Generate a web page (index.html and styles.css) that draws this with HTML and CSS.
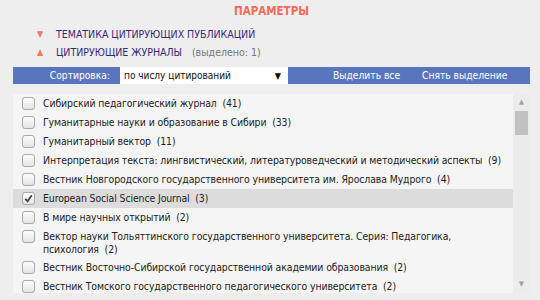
FILE: index.html
```html
<!DOCTYPE html>
<html lang="ru">
<head>
  <meta charset="UTF-8" />
  <title>Параметры</title>
  <link rel="stylesheet" href="styles.css">
</head>
<body>
  <div class="panel">
    <h2 class="title">ПАРАМЕТРЫ</h2>

    <div class="toggles">
      <div class="toggle">
        <span class="arrow">&#9660;</span>
        <span class="toggle-name">ТЕМАТИКА ЦИТИРУЮЩИХ ПУБЛИКАЦИЙ</span>
      </div>
      <div class="toggle">
        <span class="arrow">&#9650;</span>
        <span class="toggle-name">ЦИТИРУЮЩИЕ ЖУРНАЛЫ</span>
        <span class="toggle-note">(выделено: 1)</span>
      </div>
    </div>

    <div class="toolbar">
      <span class="sort-label">Сортировка:</span>
      <div class="sort-select">
        <span>по числу цитирований</span>
        <span class="sort-arrow">&#9660;</span>
      </div>
      <span class="tool-link select-all">Выделить все</span>
      <span class="tool-link">Снять выделение</span>
    </div>

    <div class="list-box">
      <div class="list">
        <label class="row"><span class="box"></span><span class="name">Сибирский педагогический журнал&nbsp;&nbsp;(41)</span></label>
        <label class="row"><span class="box"></span><span class="name">Гуманитарные науки и образование в Сибири&nbsp;&nbsp;(33)</span></label>
        <label class="row"><span class="box"></span><span class="name">Гуманитарный вектор&nbsp;&nbsp;(11)</span></label>
        <label class="row"><span class="box"></span><span class="name">Интерпретация текста: лингвистический, литературоведческий и методический аспекты&nbsp;&nbsp;(9)</span></label>
        <label class="row"><span class="box"></span><span class="name">Вестник Новгородского государственного университета им. Ярослава Мудрого&nbsp;&nbsp;(4)</span></label>
        <label class="row selected"><span class="box checked"><svg viewBox="0 0 12 12"><path d="M2.5 6.5 L5 9 L9.5 2.5" /></svg></span><span class="name">European Social Science Journal&nbsp;&nbsp;(3)</span></label>
        <label class="row"><span class="box"></span><span class="name">В мире научных открытий&nbsp;&nbsp;(2)</span></label>
        <label class="row"><span class="box"></span><span class="name">Вектор науки Тольяттинского государственного университета. Серия: Педагогика, психология&nbsp;&nbsp;(2)</span></label>
        <label class="row"><span class="box"></span><span class="name">Вестник Восточно-Сибирской государственной академии образования&nbsp;&nbsp;(2)</span></label>
        <label class="row"><span class="box"></span><span class="name">Вестник Томского государственного педагогического университета&nbsp;&nbsp;(2)</span></label>
      </div>
      <div class="scrollbar">
        <span class="scroll-btn">&#9650;</span>
        <span class="thumb"></span>
        <span class="track"></span>
        <span class="scroll-btn">&#9660;</span>
      </div>
    </div>
  </div>
</body>
</html>
```

FILE: styles.css
```css
* {
  margin: 0;
  padding: 0;
  box-sizing: border-box;
}

body {
  background: #eeeeee;
  color: #222;
  font-family: "DejaVu Sans Condensed", "DejaVu Sans", sans-serif;
  font-stretch: condensed;
  font-size: 11px;
  height: 300px;
  overflow: hidden;
}

.panel {
  padding: 4px 10px 0 13px;
}

.title {
  text-align: center;
  color: #f26a5a;
  font-size: 11.5px;
  font-weight: bold;
  line-height: 14px;
}

.toggles {
  padding: 9px 0 0 24px;
  display: flex;
  flex-direction: column;
  gap: 4px;
  font-size: 10.5px;
}

.toggle {
  display: flex;
  align-items: center;
  height: 14px;
}

.arrow {
  color: #f07a5c;
  font-size: 9px;
  width: 19px;
}

.toggle-name {
  color: #35297a;
}

.toggle-note {
  color: #777;
  margin-left: 10px;
}

.toolbar {
  margin-top: 8px;
  height: 17px;
  background: #5975bd;
  color: #fff;
  display: flex;
  align-items: center;
  font-size: 10.2px;
}

.sort-label {
  width: 97px;
  text-align: right;
}

.sort-select {
  margin-left: 10px;
  width: 168px;
  height: 17px;
  background: #fff;
  color: #111;
  display: flex;
  align-items: center;
  justify-content: space-between;
  padding: 0 7px 0 4px;
  font-size: 10px;
}

.sort-arrow {
  font-size: 9px;
}

.tool-link {
  margin-left: 22px;
}

.select-all {
  margin-left: 45px;
}

.list-box {
  margin-top: 10px;
  height: 199px;
  background: #f5f5f5;
  display: flex;
  overflow: hidden;
}

.list {
  flex: 1;
  overflow: hidden;
  font-size: 10.4px;
  letter-spacing: -0.1px;
}

.row {
  display: flex;
  align-items: flex-start;
  min-height: 19px;
  padding: 3px 0 2px 9px;
}

.row.selected {
  background: #dcdcdc;
}

.box {
  flex: none;
  width: 13px;
  height: 13px;
  border: 1px solid #a9a9a9;
  border-radius: 3px;
  background: linear-gradient(#fdfdfd, #e4e4e4);
  margin-right: 8px;
  display: flex;
  align-items: center;
  justify-content: center;
}

.box svg {
  width: 11px;
  height: 11px;
  fill: none;
  stroke: #444;
  stroke-width: 2;
}

.name {
  line-height: 13px;
}

.scrollbar {
  width: 17px;
  background: #ececec;
  display: flex;
  flex-direction: column;
  align-items: center;
}

.scroll-btn {
  color: #a0a0a0;
  font-size: 7px;
  height: 17px;
  line-height: 17px;
}

.thumb {
  width: 13px;
  height: 24px;
  background: #c1c1c1;
}

.track {
  flex: 1;
}
```
